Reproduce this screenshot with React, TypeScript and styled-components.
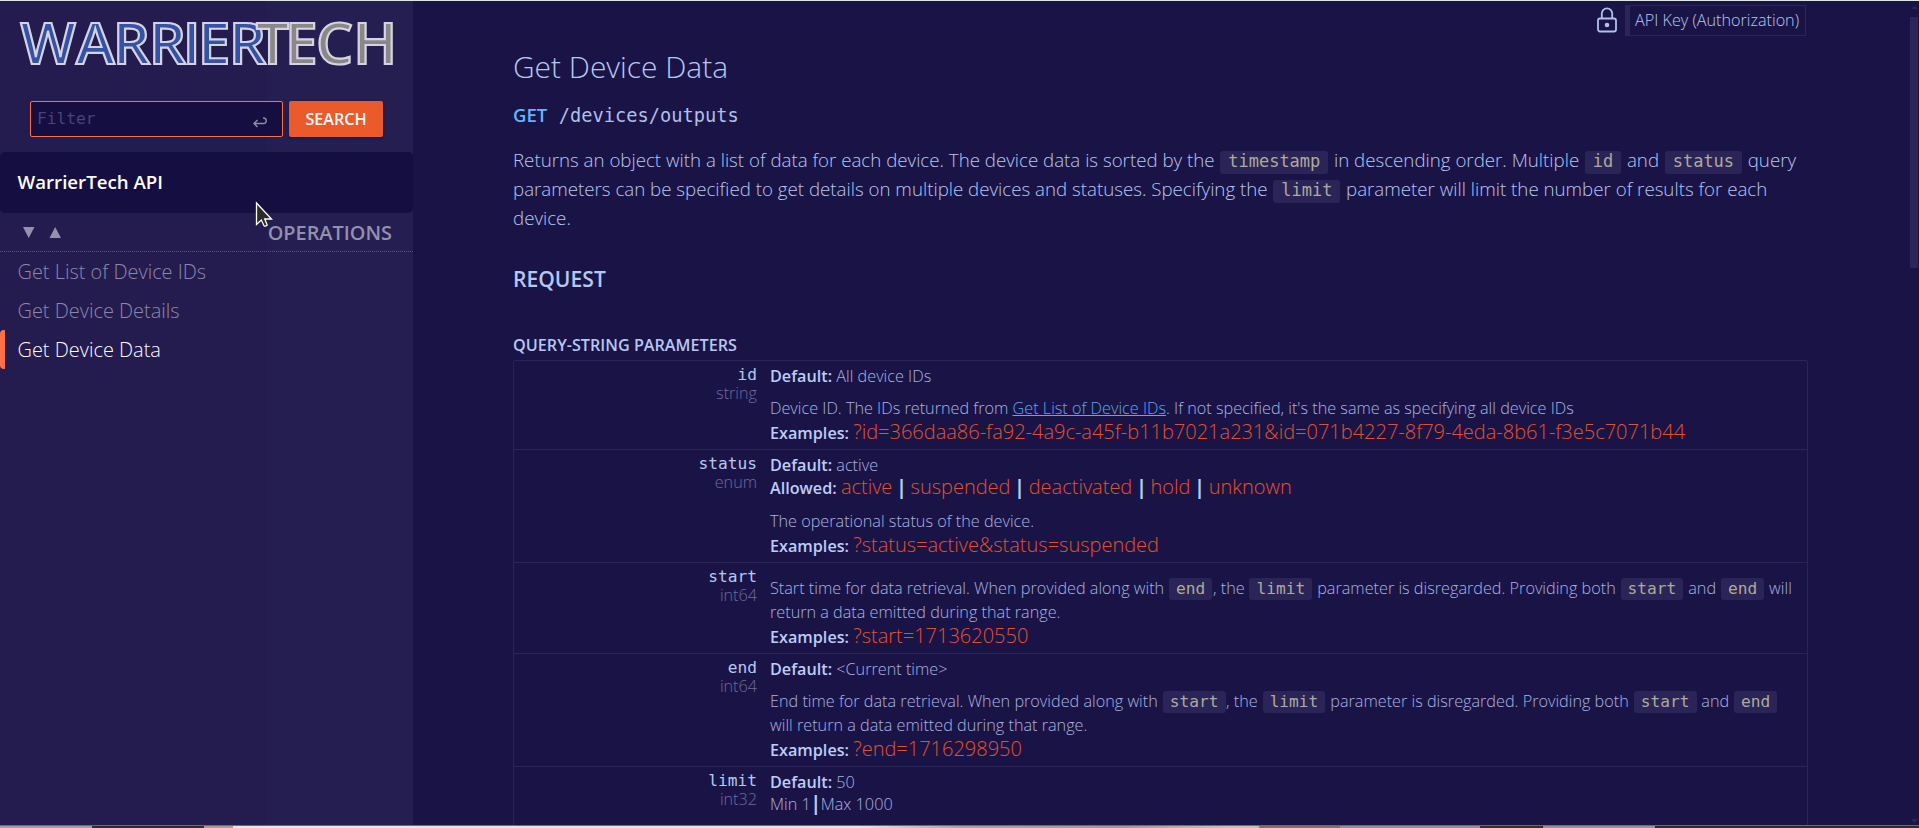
import React from 'react';
import styled, { createGlobalStyle } from 'styled-components';

const sans = '"Open Sans", "Noto Sans", sans-serif';
const mono = '"DejaVu Sans Mono", "Liberation Mono", monospace';

const GlobalStyle = createGlobalStyle`
  * { box-sizing: border-box; }
  body {
    margin: 0;
    overflow: hidden;
    background: #1a1446;
    color: #b6c7f2;
    font-family: ${sans};
    font-weight: 300;
  }
`;

const Page = styled.div`
  display: flex;
  flex-direction: column;
  height: 828px;
  border-top: 1px solid #dfe6e6;
`;

const Columns = styled.div`
  flex: 1;
  min-height: 0;
  display: flex;
  overflow: hidden;
`;

const Sidebar = styled.nav`
  position: relative;
  width: 413px;
  flex: none;
  background: linear-gradient(90deg, #241c4f 0 267px, #251e51 267px);
`;

const Logo = styled.svg`
  display: block;
  width: 393px;
  height: 76px;
  margin: 0 0 24px 10px;
  overflow: visible;
`;

const SearchRow = styled.div`
  display: flex;
  gap: 6px;
  height: 36px;
  padding-left: 30px;
`;

const FilterBox = styled.div`
  display: flex;
  align-items: center;
  justify-content: space-between;
  width: 253px;
  padding: 0 14px 0 6px;
  border: 1px solid #ff7043;
  border-radius: 2px;
  background: #150e40;
  color: #49437a;
  font: 400 16.2px/34px ${mono};
`;

const EnterIcon = styled.svg`
  width: 16px;
  height: 12px;
  margin-top: 5px;
`;

const SearchButton = styled.button`
  width: 94px;
  padding: 0;
  border: 0;
  border-radius: 2px;
  background: #eb5a2b;
  box-shadow: 0 1px 3px rgba(0, 0, 0, 0.35);
  color: #fff;
  font: 600 16.1px/36px ${sans};
`;

const ApiTitle = styled.div`
  height: 61px;
  margin-top: 15px;
  padding-left: 17.5px;
  border-radius: 5px;
  background: #150e40;
  color: #fff;
  font-size: 18.7px;
  font-weight: 600;
  line-height: 59px;
`;

const GroupHeader = styled.div`
  display: flex;
  align-items: center;
  justify-content: space-between;
  height: 39px;
  padding: 0 21px 0 23px;
  border-bottom: 1px dotted #5b5580;
  color: #9490ae;
  font-size: 19.9px;
  font-weight: 600;
  line-height: 38px;
`;

const GroupName = styled.span`
  padding-top: 2px;
`;

const Arrows = styled.svg`
  width: 38px;
  height: 12px;
`;

const NavItem = styled.div<{ $active?: boolean }>`
  height: 39px;
  padding-left: ${(p) => (p.$active ? 12.5 : 17.5)}px;
  border-left: ${(p) => (p.$active ? '5px solid #ff7043' : '0')};
  border-radius: ${(p) => (p.$active ? '4px 0 0 4px' : '0')};
  color: ${(p) => (p.$active ? '#fff' : '#8d88a9')};
  font-size: 19.95px;
  line-height: 39px;
`;

const Cursor = styled.svg`
  position: absolute;
  left: 253px;
  top: 198px;
  width: 22px;
  height: 30px;
`;

const Main = styled.main`
  position: relative;
  flex: 1;
  padding: 4px 111px 0 100px;
`;

const AuthRow = styled.div`
  display: flex;
  justify-content: flex-end;
  gap: 8px;
  height: 31px;
  padding-right: 2px;
`;

const LockIcon = styled.svg`
  width: 20px;
  height: 26px;
  margin-top: 2px;
`;

const AuthBox = styled.div`
  width: 181px;
  padding-left: 5px;
  border: 1px solid #2c2559;
  border-left-width: 5px;
  font-size: 16.2px;
  line-height: 29px;
  white-space: nowrap;
`;

const Title = styled.h1`
  margin: 11px 0 0;
  font-size: 29.9px;
  font-weight: 300;
  line-height: 40px;
`;

const Endpoint = styled.div`
  display: flex;
  align-items: baseline;
  gap: 11.5px;
  height: 28px;
  margin-top: 14px;
  line-height: 28px;
`;

const Method = styled.span`
  color: #67b3fb;
  font-size: 18.5px;
  font-weight: 600;
`;

const Path = styled.span`
  color: #afbfe9;
  font-family: ${mono};
  font-size: 18.7px;
  font-weight: 400;
`;

const Description = styled.p`
  margin: 16px 0 0;
  font-size: 18.72px;
  line-height: 29px;
`;

const SectionTitle = styled.h2`
  margin: 32px 0 0;
  font-size: 21.1px;
  font-weight: 600;
  line-height: 30px;
`;

const TableTitle = styled.h3`
  margin: 40px 0 4px;
  font-size: 16.2px;
  font-weight: 600;
  line-height: 22px;
`;

const Chip = styled.code<{ $small?: boolean }>`
  display: inline-block;
  height: ${(p) => (p.$small ? 22 : 23)}px;
  margin: -3px ${(p) => (p.$small ? 0.6 : 0.9)}px;
  padding: 0 ${(p) => (p.$small ? 7.1 : 7.9)}px;
  border-radius: 3px;
  background: #2b2457;
  color: #aeaa9c;
  font: 400 ${(p) => (p.$small ? 16.2 : 17)}px/21px ${mono};
`;

const Table = styled.div`
  width: 1295px;
  border: 1px solid #2b2457;
  border-radius: 2px;
`;

const Row = styled.div<{ $height: number }>`
  display: flex;
  height: ${(p) => p.$height}px;
  border-bottom: 1px solid #2b2457;
`;

const NameCell = styled.div`
  width: 243px;
  padding-top: 5px;
  text-align: right;
`;

const Name = styled.div`
  font: 400 16.2px/18px ${mono};
`;

const TypeName = styled.div`
  color: #6d6b9b;
  font-size: 16.2px;
  line-height: 18px;
`;

const Detail = styled.div`
  flex: 1;
  padding: 4.4px 8px 0 13px;
  color: #a9b3e0;
  font-size: 16.23px;
  line-height: 22px;
`;

const Strong = styled.strong`
  color: #bccdf7;
  font-size: 16.2px;
  font-weight: 600;
`;

const Text = styled.div`
  padding-top: 9px;
  line-height: 24px;
`;

const AllowedLine = styled.div`
  line-height: 24px;
`;

const ExampleLine = styled.div`
  line-height: 26px;
`;

const Value = styled.span`
  color: #e0532d;
  font-size: 20px;
  line-height: 0;
`;

const Bar = styled.span<{ $tight?: boolean }>`
  margin: 0 ${(p) => (p.$tight ? -0.5 : 3.6)}px;
  color: #bccdf7;
  font-size: 20px;
  font-weight: 700;
  line-height: 0;
`;

const Link = styled.a`
  color: #5fa6f0;
  text-decoration: underline;
`;

const ScrollTrack = styled.svg`
  position: absolute;
  top: 0;
  right: 0;
  width: 10px;
  height: 824px;
`;

const PhotoStrip = styled.div`
  flex: none;
  height: 3px;
  border-top: 1px solid #6c6875;
  background: linear-gradient(
    90deg,
    #8fa3bd 0 92px, #2c2b30 92px 204px, #ab9c8d 204px 233px,
    #e6e6e6 233px 860px, #a5a5a8 960px, #9c9a98 1120px, #c6c3b0 1225px 1258px,
    #85705c 1260px 1340px, #8a93a0 1340px 1480px, #3c2b25 1480px 1543px,
    #8c95a8 1543px 1655px, #2a2c2c 1655px
  );
`;

const glyphs: { char: string; x: number; tech?: boolean }[] = [
  { char: 'W', x: 10.5 },
  { char: 'A', x: 66 },
  { char: 'R', x: 102.8 },
  { char: 'R', x: 138.8 },
  { char: 'I', x: 172.8 },
  { char: 'E', x: 187.8 },
  { char: 'R', x: 218.8 },
  { char: 'T', x: 246, tech: true },
  { char: 'E', x: 275, tech: true },
  { char: 'C', x: 306, tech: true },
  { char: 'H', x: 343.2, tech: true },
];

type Param = {
  name: string;
  type: string;
  height: number;
  fallback?: string;
  allowed?: string[];
  range?: [string, string];
  text?: React.ReactNode;
  example?: string;
};

const C = ({ children }: { children: string }) => <Chip $small>{children}</Chip>;

const params: Param[] = [
  {
    name: 'id',
    type: 'string',
    height: 89,
    fallback: 'All device IDs',
    text: (
      <>
        Device ID. The IDs returned from <Link>Get List of Device IDs</Link>. If not specified, it's the same as
        specifying all device IDs
      </>
    ),
    example: '?id=366daa86-fa92-4a9c-a45f-b11b7021a231&id=071b4227-8f79-4eda-8b61-f3e5c7071b44',
  },
  {
    name: 'status',
    type: 'enum',
    height: 112.5,
    fallback: 'active',
    allowed: ['active', 'suspended', 'deactivated', 'hold', 'unknown'],
    text: 'The operational status of the device.',
    example: '?status=active&status=suspended',
  },
  {
    name: 'start',
    type: 'int64',
    height: 91.5,
    text: (
      <>
        Start time for data retrieval. When provided along with <C>end</C>, the <C>limit</C> parameter is disregarded.
        Providing both <C>start</C> and <C>end</C> will return a data emitted during that range.
      </>
    ),
    example: '?start=1713620550',
  },
  {
    name: 'end',
    type: 'int64',
    height: 113,
    fallback: '<Current time>',
    text: (
      <>
        End time for data retrieval. When provided along with <C>start</C>, the <C>limit</C> parameter is disregarded.
        Providing both <C>start</C> and <C>end</C> will return a data emitted during that range.
      </>
    ),
    example: '?end=1716298950',
  },
  { name: 'limit', type: 'int32', height: 90, fallback: '50', range: ['Min 1', 'Max 1000'] },
];

export default function App() {
  return (
    <Page>
      <GlobalStyle />
      <Columns>
        <Sidebar>
          <Logo viewBox="0 0 393 76">
            {glyphs.map((g, i) => (
              <text
                key={i}
                x={g.x}
                y="63"
                fontFamily="Open Sans"
                fontSize="58.5"
                fontWeight="650"
                fill={g.tech ? '#8b8787' : '#3452a6'}
                stroke="#d6d4e4"
                strokeWidth="2.2"
              >
                {g.char}
              </text>
            ))}
          </Logo>
          <SearchRow>
            <FilterBox>
              <span>Filter</span>
              <EnterIcon viewBox="0 0 16 12" fill="none" stroke="#8f8ba9" strokeWidth="1.4">
                <path d="M5.500 4 2 7.500 5.500 11M2.300 7.500H12a2.800 2.800 0 0 0 0-5.500H11" />
              </EnterIcon>
            </FilterBox>
            <SearchButton>SEARCH</SearchButton>
          </SearchRow>
          <ApiTitle>WarrierTech API</ApiTitle>
          <GroupHeader>
            <Arrows viewBox="0 0 38 12" fill="#9490ae">
              <path d="M0 1H11.500L5.700 12ZM26.500 12H38L32.200 1Z" />
            </Arrows>
            <GroupName>OPERATIONS</GroupName>
          </GroupHeader>
          <NavItem>Get List of Device IDs</NavItem>
          <NavItem>Get Device Details</NavItem>
          <NavItem $active>Get Device Data</NavItem>
          <Cursor viewBox="0 0 22 30">
            <path
              d="M3.500 4V25.500L8.300 21 11 26.700Q12.300 27.800 14.200 26L11.700 20H18.500Z"
              fill="#2b2b2b"
              stroke="#fff"
              strokeWidth="1.300"
            />
          </Cursor>
        </Sidebar>
        <Main>
          <AuthRow>
            <LockIcon viewBox="0 0 20 26" fill="none" stroke="#b0c1ec" strokeWidth="1.8">
              <rect x="1" y="11.500" width="18" height="13" rx="2" />
              <path d="M4.800 11.500V6.500a5.200 5.200 0 0 1 10.400 0V11.500" />
              <circle cx="10" cy="18" r="1.400" fill="#b0c1ec" />
            </LockIcon>
            <AuthBox>API Key (Authorization)</AuthBox>
          </AuthRow>
          <Title>Get Device Data</Title>
          <Endpoint>
            <Method>GET</Method>
            <Path>/devices/outputs</Path>
          </Endpoint>
          <Description>
            Returns an object with a list of data for each device. The device data is sorted by the{' '}
            <Chip>timestamp</Chip> in descending order. Multiple <Chip>id</Chip> and <Chip>status</Chip> query
            parameters can be specified to get details on multiple devices and statuses. Specifying the{' '}
            <Chip>limit</Chip> parameter will limit the number of results for each device.
          </Description>
          <SectionTitle>REQUEST</SectionTitle>
          <TableTitle>QUERY-STRING PARAMETERS</TableTitle>
          <Table>
            {params.map((p) => (
              <Row key={p.name} $height={p.height}>
                <NameCell>
                  <Name>{p.name}</Name>
                  <TypeName>{p.type}</TypeName>
                </NameCell>
                <Detail>
                  {p.fallback && (
                    <div>
                      <Strong>Default:</Strong> {p.fallback}
                    </div>
                  )}
                  {p.allowed && (
                    <AllowedLine>
                      <Strong>Allowed:</Strong>{' '}
                      {p.allowed.map((v, i) => (
                        <React.Fragment key={v}>
                          {i > 0 && <Bar>|</Bar>}
                          <Value>{v}</Value>
                        </React.Fragment>
                      ))}
                    </AllowedLine>
                  )}
                  {p.range && (
                    <div>
                      {p.range[0]}
                      <Bar $tight>|</Bar>
                      {p.range[1]}
                    </div>
                  )}
                  {p.text && <Text>{p.text}</Text>}
                  {p.example && (
                    <ExampleLine>
                      <Strong>Examples:</Strong> <Value>{p.example}</Value>
                    </ExampleLine>
                  )}
                </Detail>
              </Row>
            ))}
          </Table>
          <ScrollTrack viewBox="0 0 10 824" fill="#2c2559">
            <path d="M2 8H9L5.500 5ZM2 818H9L5.500 822Z" />
            <rect x="1" y="16" width="8" height="251" />
          </ScrollTrack>
        </Main>
      </Columns>
      <PhotoStrip />
    </Page>
  );
}
